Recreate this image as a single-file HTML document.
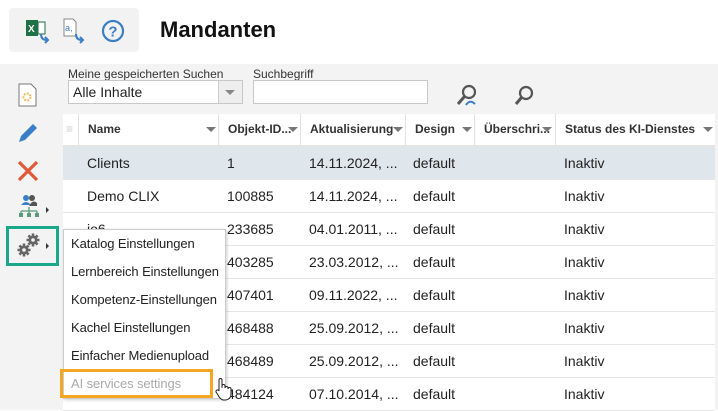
<!DOCTYPE html>
<html><head><meta charset="utf-8"><style>
*{margin:0;padding:0;box-sizing:border-box}
body{width:718px;height:410px;overflow:hidden;background:#fff;font-family:"Liberation Sans",Arial,sans-serif;position:relative;font-size:14px;color:#222}
.a{position:absolute}
.tb{left:9px;top:8px;width:130px;height:44px;background:#f2f2f2;border-radius:4px}
h1{position:absolute;left:160px;top:17px;font-size:22px;font-weight:bold;color:#111}
.gray{left:0;top:64px;width:718px;height:346px;background:#f3f3f3}
.lbl{font-size:12px;color:#333}
.inp{background:#fff;border:1px solid #c8c8c8}
.hdr{left:63px;top:114px;width:652px;height:33px;background:#fff;border-bottom:2px solid #e4e4e4}
.hc{position:absolute;top:0;height:31px;border-left:1px solid #e2e2e2;font-size:12px;font-weight:bold;color:#333;line-height:31px;padding-left:9px}
.ar{position:absolute;top:13px;width:0;height:0;border-left:5px solid transparent;border-right:5px solid transparent;border-top:5px solid #777}
.row{left:63px;width:652px;height:33px;background:#fff;border-bottom:1px solid #e6e6e6;font-size:14px;line-height:32px}
.row span{position:absolute}
.menu{left:63px;top:229px;width:163px;height:170px;background:#fff;border:1px solid #ccc;box-shadow:1px 1px 3px rgba(0,0,0,.2)}
.mi{position:absolute;left:7px;font-size:13px;letter-spacing:-0.1px;color:#222}
</style></head><body>
<div class="a tb"></div>
<svg class="a" style="left:25px;top:18px" width="26" height="26" viewBox="0 0 26 26"><rect x="1" y="2" width="12" height="16" fill="#1e7145"/><text x="3" y="14" font-size="10" fill="#fff" font-family="Liberation Sans" font-weight="bold">X</text><rect x="13" y="4" width="7" height="12" fill="#fff" stroke="#1e7145"/><path d="M16 16 q0 6 6 6" stroke="#3a7ec6" stroke-width="2" fill="none"/><path d="M20 19 l3 3 -3 3" stroke="#3a7ec6" stroke-width="2" fill="none"/></svg>
<svg class="a" style="left:62px;top:18px" width="26" height="26" viewBox="0 0 26 26"><path d="M2 1h9l3 3v14H2z" fill="#fff" stroke="#888"/><text x="3" y="13" font-size="9" fill="#3a7ec6" font-family="Liberation Sans">a,</text><path d="M14 16 q0 6 6 6" stroke="#3a7ec6" stroke-width="2" fill="none"/><path d="M18 19 l3 3 -3 3" stroke="#3a7ec6" stroke-width="2" fill="none"/></svg>
<svg class="a" style="left:101px;top:19px" width="24" height="24" viewBox="0 0 24 24"><circle cx="12" cy="12" r="10" fill="none" stroke="#3a7ec6" stroke-width="2.2"/><text x="12" y="17.5" font-size="15" font-weight="bold" fill="#3a7ec6" text-anchor="middle" font-family="Liberation Sans">?</text></svg>
<h1>Mandanten</h1>
<div class="a gray"></div>
<div class="a lbl" style="left:68px;top:67px">Meine gespeicherten Suchen</div>
<div class="a inp" style="left:68px;top:80px;width:175px;height:24px;font-size:14px;padding:3px 4px">Alle Inhalte</div>
<div class="a" style="left:218px;top:81px;width:24px;height:22px;background:#eee;border-left:1px solid #ccc"></div>
<div class="a ar" style="left:225px;top:90px;border-top-color:#888"></div>
<div class="a lbl" style="left:253px;top:67px">Suchbegriff</div>
<div class="a inp" style="left:253px;top:80px;width:175px;height:24px"></div>
<svg class="a" style="left:455px;top:83px" width="26" height="26" viewBox="0 0 26 26"><circle cx="14" cy="9" r="6" fill="none" stroke="#555" stroke-width="2.2"/><path d="M9.5 13.5 L3 21" stroke="#555" stroke-width="3"/><path d="M11 22 q4-6 9-1" stroke="#3a7ec6" stroke-width="2" fill="none"/></svg>
<svg class="a" style="left:513px;top:84px" width="24" height="24" viewBox="0 0 24 24"><circle cx="13" cy="9" r="6" fill="none" stroke="#555" stroke-width="2.2"/><path d="M8.5 13.5 L3 20" stroke="#555" stroke-width="3"/></svg>
<svg class="a" style="left:18px;top:83px" width="20" height="24" viewBox="0 0 20 24"><path d="M1 1h12l5 5v17H1z" fill="#fff" stroke="#777"/><circle cx="9" cy="14" r="3.5" fill="none" stroke="#f0b860" stroke-width="2" stroke-dasharray="2 1.2"/></svg>
<svg class="a" style="left:16px;top:121px" width="24" height="24" viewBox="0 0 24 24"><path d="M3 21 L5 15 L17 3 L21 7 L9 19 Z" fill="#3a7ec6"/></svg>
<svg class="a" style="left:16px;top:159px" width="24" height="24" viewBox="0 0 24 24"><path d="M3 3 L21 21 M21 3 L3 21" stroke="#e05a3a" stroke-width="3.2"/></svg>
<svg class="a" style="left:17px;top:194px" width="24" height="24" viewBox="0 0 24 24"><circle cx="9" cy="4" r="3" fill="#3a7ec6"/><path d="M4 11 q5-6 10 0z" fill="#3a7ec6"/><circle cx="15" cy="4" r="3" fill="#555"/><path d="M12 12 h8v-3q-3-3-6 0" fill="#555"/><path d="M12 13v4 M4 17h16 M4 17v2 M12 17v2 M20 17v2" stroke="#5a9a7a" stroke-width="1.3" fill="none"/><rect x="2" y="19" width="4" height="4" fill="#5a9a7a"/><rect x="10" y="19" width="4" height="4" fill="#5a9a7a"/><rect x="18" y="19" width="4" height="4" fill="#5a9a7a"/></svg>
<div class="a" style="left:46px;top:207px;border-left:3px solid #333;border-top:3px solid transparent;border-bottom:3px solid transparent"></div>
<div class="a" style="left:6px;top:226px;width:53px;height:40px;border:3px solid #19a98a"></div>
<svg class="a" style="left:17px;top:232px" width="24" height="26" viewBox="0 0 24 26">
<g fill="#666"><circle cx="7" cy="18" r="4.5"/><g stroke="#666" stroke-width="2.6"><path d="M7 11.5v13M0.5 18h13M2.4 13.4l9.2 9.2M11.6 13.4l-9.2 9.2"/></g><circle cx="7" cy="18" r="1.8" fill="#f3f3f3"/>
<circle cx="16" cy="8" r="4.5"/><g stroke="#666" stroke-width="2.6"><path d="M16 1.5v13M9.5 8h13M11.4 3.4l9.2 9.2M20.6 3.4l-9.2 9.2"/></g><circle cx="16" cy="8" r="1.8" fill="#f3f3f3"/></g></svg>
<div class="a" style="left:46px;top:243px;border-left:3px solid #333;border-top:3px solid transparent;border-bottom:3px solid transparent"></div>
<div class="a hdr">
<div class="hc" style="left:0;width:15px;border-left:none;padding-left:3px;color:#ccc;font-weight:normal">≡</div>
<div class="hc" style="left:15px;width:140px">Name</div><div class="ar" style="left:143px"></div>
<div class="hc" style="left:155px;width:82px">Objekt-ID...</div><div class="ar" style="left:225px"></div>
<div class="hc" style="left:237px;width:105px">Aktualisierung</div><div class="ar" style="left:330px"></div>
<div class="hc" style="left:342px;width:69px">Design</div><div class="ar" style="left:399px"></div>
<div class="hc" style="left:411px;width:81px">Überschri...</div><div class="ar" style="left:479px"></div>
<div class="hc" style="left:492px;width:160px">Status des KI-Dienstes</div><div class="ar" style="left:640px"></div>
</div>
<div class="a row" style="top:147px;background:#dfe6ec"><span style="left:24px">Clients</span><span style="left:164px">1</span><span style="left:246px">14.11.2024, ...</span><span style="left:350px">default</span><span style="left:501px">Inaktiv</span></div>
<div class="a row" style="top:180px"><span style="left:24px">Demo CLIX</span><span style="left:164px">100885</span><span style="left:246px">14.11.2024, ...</span><span style="left:350px">default</span><span style="left:501px">Inaktiv</span></div>
<div class="a row" style="top:213px"><span style="left:24px">io6</span><span style="left:164px">233685</span><span style="left:246px">04.01.2011, ...</span><span style="left:350px">default</span><span style="left:501px">Inaktiv</span></div>
<div class="a row" style="top:246px"><span style="left:164px">403285</span><span style="left:246px">23.03.2012, ...</span><span style="left:350px">default</span><span style="left:501px">Inaktiv</span></div>
<div class="a row" style="top:279px"><span style="left:164px">407401</span><span style="left:246px">09.11.2022, ...</span><span style="left:350px">default</span><span style="left:501px">Inaktiv</span></div>
<div class="a row" style="top:312px"><span style="left:164px">468488</span><span style="left:246px">25.09.2012, ...</span><span style="left:350px">default</span><span style="left:501px">Inaktiv</span></div>
<div class="a row" style="top:345px"><span style="left:164px">468489</span><span style="left:246px">25.09.2012, ...</span><span style="left:350px">default</span><span style="left:501px">Inaktiv</span></div>
<div class="a row" style="top:378px"><span style="left:164px">484124</span><span style="left:246px">07.10.2014, ...</span><span style="left:350px">default</span><span style="left:501px">Inaktiv</span></div>
<div class="a menu">
<div class="mi" style="top:6px">Katalog Einstellungen</div>
<div class="mi" style="top:34px">Lernbereich Einstellungen</div>
<div class="mi" style="top:62px">Kompetenz-Einstellungen</div>
<div class="mi" style="top:90px">Kachel Einstellungen</div>
<div class="mi" style="top:118px">Einfacher Medienupload</div>
<div class="mi" style="top:146px;color:#aaa">AI services settings</div>
</div>
<div class="a" style="left:60px;top:369px;width:153px;height:29px;border:3px solid #f5a623"></div>
<svg class="a" style="left:214px;top:377px" width="18" height="24" viewBox="0 0 18 24"><path d="M5 14V3a1.5 1.5 0 0 1 3 0v8V9a1.5 1.5 0 0 1 3 0v2a1.5 1.5 0 0 1 3 0v1a1.5 1.5 0 0 1 3 0v5q0 5-5 6h-3q-3-1-5-5l-2-3a1.5 1.5 0 0 1 3-1z" fill="#fff" stroke="#222" stroke-width="1"/></svg>
</body></html>
